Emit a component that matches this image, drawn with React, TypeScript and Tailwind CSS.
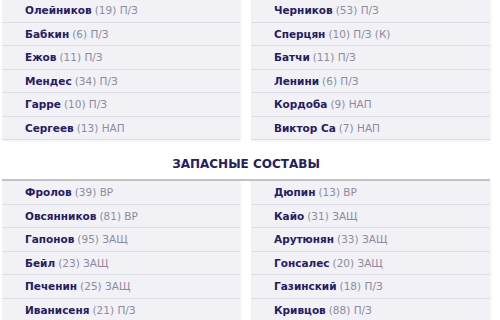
import React from "react";

type P = [string, string, string];

const top: [P[], P[]] = [
  [
    ["Олейников", "19", "П/З"],
    ["Бабкин", "6", "П/З"],
    ["Ежов", "11", "П/З"],
    ["Мендес", "34", "П/З"],
    ["Гарре", "10", "П/З"],
    ["Сергеев", "13", "НАП"],
  ],
  [
    ["Черников", "53", "П/З"],
    ["Сперцян", "10", "П/З (К)"],
    ["Батчи", "11", "П/З"],
    ["Ленини", "6", "П/З"],
    ["Кордоба", "9", "НАП"],
    ["Виктор Са", "7", "НАП"],
  ],
];

const subs: [P[], P[]] = [
  [
    ["Фролов", "39", "ВР"],
    ["Овсянников", "81", "ВР"],
    ["Гапонов", "95", "ЗАЩ"],
    ["Бейл", "23", "ЗАЩ"],
    ["Печенин", "25", "ЗАЩ"],
    ["Иванисеня", "21", "П/З"],
  ],
  [
    ["Дюпин", "13", "ВР"],
    ["Кайо", "31", "ЗАЩ"],
    ["Арутюнян", "33", "ЗАЩ"],
    ["Гонсалес", "20", "ЗАЩ"],
    ["Газинский", "18", "П/З"],
    ["Кривцов", "88", "П/З"],
  ],
];

function Col({ rows }: { rows: P[] }) {
  return (
    <div className="flex flex-col shadow-[1px_1px_2px_rgba(0,0,0,0.06)]">
      {rows.map(([n, num, pos]) => (
        <div
          key={n}
          className="h-[23.5px] flex items-center pl-[23px] bg-[#f1f1f6] border-b border-[#dddde6] text-[10.5px] leading-none"
        >
          <span className="font-bold text-[#25205f]">{n}</span>
          <span className="text-[#8e8c9c] ml-[3px]">
            ({num}) {pos}
          </span>
        </div>
      ))}
    </div>
  );
}

export default function App() {
  return (
    <div
      className="w-[500px] h-[320px] bg-white overflow-hidden pl-[2px] pr-[10px]"
      style={{ fontFamily: "'DejaVu Sans', sans-serif" }}
    >
      <div className="grid grid-cols-[238px_239px] gap-x-[11px] -mt-[1px]">
        <Col rows={top[0]} />
        <Col rows={top[1]} />
      </div>
      <div className="h-[39px] pt-[18px] text-center text-[12px] leading-none font-bold text-[#25205f]">
        ЗАПАСНЫЕ СОСТАВЫ
      </div>
      <div className="h-[2px] bg-[#c2c2c8] w-[488px]"></div>
      <div className="grid grid-cols-[238px_239px] gap-x-[11px]">
        <Col rows={subs[0]} />
        <Col rows={subs[1]} />
      </div>
    </div>
  );
}
